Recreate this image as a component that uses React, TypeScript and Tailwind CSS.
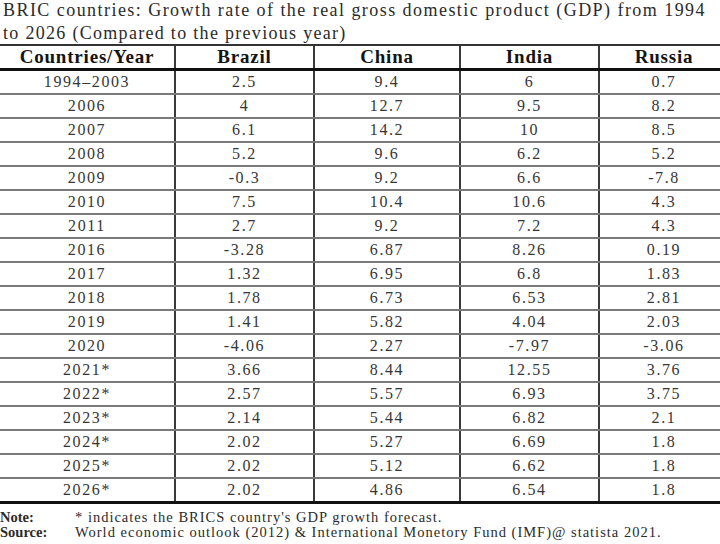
const rows: string[][] = [
  ['1994–2003', '2.5', '9.4', '6', '0.7'],
  ['2006', '4', '12.7', '9.5', '8.2'],
  ['2007', '6.1', '14.2', '10', '8.5'],
  ['2008', '5.2', '9.6', '6.2', '5.2'],
  ['2009', '-0.3', '9.2', '6.6', '-7.8'],
  ['2010', '7.5', '10.4', '10.6', '4.3'],
  ['2011', '2.7', '9.2', '7.2', '4.3'],
  ['2016', '-3.28', '6.87', '8.26', '0.19'],
  ['2017', '1.32', '6.95', '6.8', '1.83'],
  ['2018', '1.78', '6.73', '6.53', '2.81'],
  ['2019', '1.41', '5.82', '4.04', '2.03'],
  ['2020', '-4.06', '2.27', '-7.97', '-3.06'],
  ['2021*', '3.66', '8.44', '12.55', '3.76'],
  ['2022*', '2.57', '5.57', '6.93', '3.75'],
  ['2023*', '2.14', '5.44', '6.82', '2.1'],
  ['2024*', '2.02', '5.27', '6.69', '1.8'],
  ['2025*', '2.02', '5.12', '6.62', '1.8'],
  ['2026*', '2.02', '4.86', '6.54', '1.8'],
]

const headers = ['Countries/Year', 'Brazil', 'China', 'India', 'Russia']
const widths = ['w-[176px]', 'w-[139px]', 'w-[146px]', 'w-[139px]', 'w-[128px]']

export default function App() {
  return (
    <div className="w-[720px] h-[544px] overflow-hidden bg-white text-[#2b2b2b] font-['Liberation_Serif','Times_New_Roman',serif]">
      <div className="h-[45px] pl-[3px] text-[18px] leading-[23px] tracking-[1.45px] whitespace-nowrap -mt-[1px]">
        <div>BRIC countries: Growth rate of the real gross domestic product (GDP) from 1994</div>
        <div className="tracking-[1.3px]">to 2026 (Compared to the previous year)</div>
      </div>

      <div className="w-[728px]">
        <div className="flex h-[27px] border-t-2 border-b-[3px] border-t-[#333] border-b-[#111]">
          {headers.map((h, i) => (
            <div
              key={h}
              className={`${widths[i]} shrink-0 flex items-center justify-center font-bold text-[19px] tracking-[0.8px] text-[#141414] ${
                i < headers.length - 1 ? 'border-r-2 border-[#3a3a3a]' : ''
              }`}
            >
              {h}
            </div>
          ))}
        </div>

        {rows.map((r, ri) => (
          <div
            key={r[0]}
            className={`flex ${
              ri === rows.length - 1 ? 'h-[25px] border-b-[3px] border-[#111]' : 'h-[24px] border-b-2 border-[#7a7a7a]'
            }`}
          >
            {r.map((c, i) => (
              <div
                key={i}
                className={`${widths[i]} shrink-0 flex items-center justify-center text-[16px] tracking-[1.6px] text-[#363636] ${
                  i < r.length - 1 ? 'border-r-2 border-[#3a3a3a]' : ''
                }`}
              >
                {c}
              </div>
            ))}
          </div>
        ))}
      </div>

      <div className="pt-[6px] text-[14.5px] leading-[15px] tracking-[1px] whitespace-nowrap">
        <div className="flex">
          <span className="w-[75px] font-bold tracking-normal">Note:</span>
          <span>* indicates the BRICS country's GDP growth forecast.</span>
        </div>
        <div className="flex">
          <span className="w-[75px] font-bold tracking-normal">Source:</span>
          <span>World economic outlook (2012) &amp; International Monetory Fund (IMF)@ statista 2021.</span>
        </div>
      </div>
    </div>
  )
}
